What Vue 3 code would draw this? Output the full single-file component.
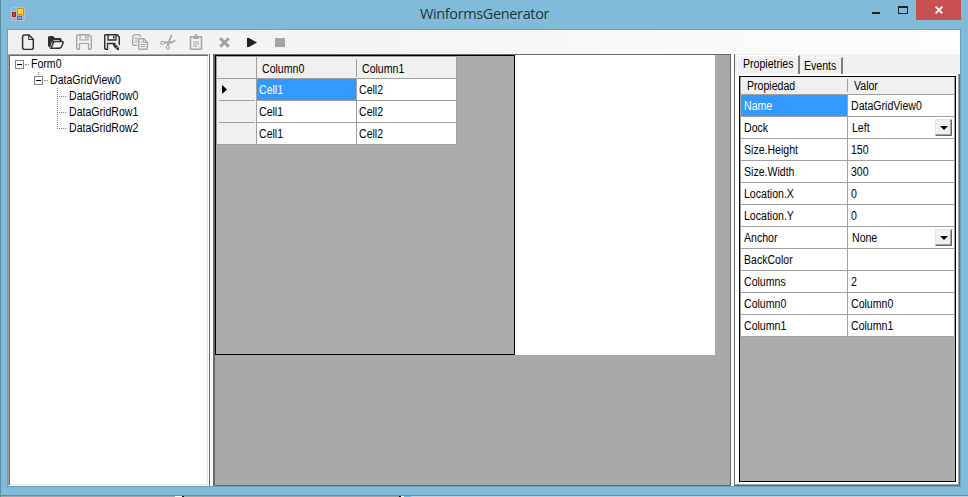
<script setup>
const icons = [
  { name: 'new', svg: '<path d="M3.800 1H9l4.300 4.300v8.900l-1.200 1.200H3.800L2.600 14.200V2.200z" fill="none" stroke="#303030" stroke-width="1.500"/><path d="M8.800 1v4.500h4.500" fill="none" stroke="#303030" stroke-width="1.200"/>' },
  { name: 'open', svg: '<path d="M0 3l1-1h4l2 2h5.500l1 1v2h-2V6H6L3.500 9 2 14 0 12z" fill="#303030"/><path d="M5.800 7.600h8.500l1 1-2 4.400-1.500 1.200H3z" fill="#f3f3f3" stroke="#303030" stroke-width="1.500"/>' },
  { name: 'save', off: true, svg: '<path d="M3.500 15.300H1.500L.7 14.500v-13l.8-.8h11.500l2.300 2.300v11.500l-.8 .8h-2" fill="none" stroke="#a6a6a6" stroke-width="1.400"/><path d="M4 1v5h8V1M3.500 16V9.500h9V16" fill="none" stroke="#a6a6a6" stroke-width="1.200"/><path d="M9 2h1.500v2.500H9z" fill="#a6a6a6"/>' },
  { name: 'save-as', svg: '<path d="M3.500 15.300H1.500L.7 14.500v-13l.8-.8h11.500l2.300 2.300v8" fill="none" stroke="#303030" stroke-width="1.500"/><path d="M4 1v5h8V1M3.500 16V9.500h8" fill="none" stroke="#303030" stroke-width="1.300"/><path d="M9 2h1.500v2.500H9z" fill="#303030"/><path d="M8.500 9.500l3 .8 3.500 3.500v2.200h-1.800l-3.500-3.500z" fill="#303030"/><path d="M12 14.500l1.500-1.500" stroke="#f3f3f3" stroke-width=".7"/>' },
  { name: 'copy', off: true, svg: '<path d="M5.500 11.300H1.500L.7 10.500v-8L2.500 .7H7l2 2" fill="none" stroke="#a6a6a6" stroke-width="1.300"/><path d="M2.500 4h3M2.500 6h3M2.500 8h3" stroke="#a6a6a6"/><path d="M6.700 4.700h5l3.600 3.600v6.200l-.8 .8H7.500l-.8-.8z" fill="#f3f3f3" stroke="#a6a6a6" stroke-width="1.400"/><path d="M11.500 5v3.500H15M8.500 8h2M8.500 10.500h5M8.500 12.500h5" fill="none" stroke="#a6a6a6"/>' },
  { name: 'cut', off: true, svg: '<path d="M11.500 1L7.800 11M15.500 6.500L11 8.500H5" fill="none" stroke="#a6a6a6" stroke-width="1.800"/><ellipse cx="2.700" cy="8.700" rx="2" ry="1.400" fill="none" stroke="#a6a6a6" stroke-width="1.100"/><ellipse cx="7.800" cy="13.200" rx="1.300" ry="2.100" fill="none" stroke="#a6a6a6" stroke-width="1.100"/>' },
  { name: 'paste', off: true, svg: '<path d="M3 2.700h10l.5 .5v11.600l-.5 .5H3l-.5-.5V3.200z" fill="none" stroke="#a6a6a6" stroke-width="1.600"/><path d="M5 2h1.500l.5-2h2l.5 2H11v3H5zM5 7.500h6v1H5zM5 9.500h6v1H5zM5 11.500h4v1H5z" fill="#a6a6a6"/><path d="M7.500 1.500h1v1h-1z" fill="#f3f3f3"/>' },
  { name: 'delete', off: true, svg: '<path d="M4.200 4.200l8.600 8.600M12.800 4.200l-8.600 8.600" stroke="#a0a0a0" stroke-width="3"/>' },
  { name: 'run', svg: '<path d="M3 4h2l8 4.500L5 13H3z" fill="#202020"/>' },
  { name: 'stop', off: true, svg: '<path d="M3 4h10v9H3z" fill="#a3a3a3"/>' },
]

const gridRows = [['Cell1', 'Cell2'], ['Cell1', 'Cell2'], ['Cell1', 'Cell2']]

const props = [
  { name: 'Name', value: 'DataGridView0' },
  { name: 'Dock', value: 'Left', combo: true },
  { name: 'Size.Height', value: '150' },
  { name: 'Size.Width', value: '300' },
  { name: 'Location.X', value: '0' },
  { name: 'Location.Y', value: '0' },
  { name: 'Anchor', value: 'None', combo: true },
  { name: 'BackColor', value: '' },
  { name: 'Columns', value: '2' },
  { name: 'Column0', value: 'Column0' },
  { name: 'Column1', value: 'Column1' },
]
</script>

<template>
  <div class="window">
    <header class="titlebar">
      <svg class="appicon" width="14" height="14" viewBox="0 0 14 14">
        <path d="M.5 .5h13v13H.5zM5.500 0v14M0 4.500h5M0 10.500h14" fill="none" stroke="#bdbdbd" />
        <path d="M6.500 1.500h6v6h-6z" fill="#ffd24a" stroke="#c79414" />
        <path d="M1.500 5.500h3v4h-3z" fill="#e04635" stroke="#a71616" />
        <path d="M6.500 9.500h4v3h-4z" fill="#78a7f0" stroke="#3d6fce" />
      </svg>
      <h1>WinformsGenerator</h1>
      <div class="controls">
        <svg width="56" height="20" viewBox="0 0 56 20">
          <path d="M0 12h8v2H0z" fill="#222" />
          <path d="M26 6h10v8H26zM27 8v5h8V8z" fill="#222" fill-rule="evenodd" />
        </svg>
        <div class="close">
          <svg width="8" height="8" viewBox="0 0 8 8"><path d="M.7 .7l6.600 6.600M7.300 .7L.7 7.300" stroke="#fff" stroke-width="1.900" /></svg>
        </div>
      </div>
    </header>

    <div class="client">
      <nav class="toolbar">
        <svg v-for="i in icons" :key="i.name" width="16" height="16" viewBox="0 0 16 16" v-html="i.svg" />
      </nav>

      <div class="body">
        <aside class="tree">
          <div class="node"><i class="box"></i><i class="dots"></i><span class="t">Form0</span></div>
          <div class="node child"><i class="box"></i><i class="dots"></i><span class="t">DataGridView0</span></div>
          <div v-for="n in 3" :key="n" class="node leaf"><i class="elbow" :class="{ last: n === 3 }"></i><span class="t">DataGridRow{{ n - 1 }}</span></div>
        </aside>
        <div class="split first"></div>
        <main class="canvas">
          <div class="form">
            <div class="gridview">
              <div class="gr head"><div class="rh"></div><div class="c"><span class="t">Column0</span></div><div class="c"><span class="t">Column1</span></div></div>
              <div v-for="(r, i) in gridRows" :key="i" class="gr">
                <div class="rh"><svg v-if="i === 0" width="5" height="9" viewBox="0 0 5 9"><path d="M0 0l5 4.500L0 9z" /></svg></div>
                <div v-for="(v, j) in r" :key="j" class="c" :class="{ sel: i === 0 && j === 0 }"><span class="t">{{ v }}</span></div>
              </div>
            </div>
          </div>
        </main>
        <div class="split second"></div>
        <aside class="side">
          <div class="tabs">
            <div class="tab active"><span class="t">Propietries</span></div>
            <div class="tab"><span class="t">Events</span></div>
          </div>
          <div class="page">
            <div class="pgrid">
              <div class="pr phead"><div class="pn"><span class="t">Propiedad</span></div><div class="pv"><span class="t">Valor</span></div></div>
              <div v-for="(p, i) in props" :key="p.name" class="pr">
                <div class="pn" :class="{ sel: i === 0 }"><span class="t">{{ p.name }}</span></div>
                <div class="pv" :class="{ combo: p.combo }">
                  <span class="t">{{ p.value }}</span>
                  <div v-if="p.combo" class="drop"><svg width="8" height="4" viewBox="0 0 8 4"><path d="M0 0h8L4 4z" /></svg></div>
                </div>
              </div>
            </div>
          </div>
        </aside>
      </div>
    </div>
    <footer class="under"></footer>
  </div>
</template>

<style>
body { margin: 0; overflow: hidden; }
</style>

<style scoped>
* { box-sizing: border-box; }
.window { width: 968px; height: 497px; background: #80bcd9; border-left: 1px solid #568ea8; font: 12px/16px "Liberation Sans", sans-serif; color: #000; display: flex; flex-direction: column; }
.titlebar { height: 29px; flex: none; display: flex; position: relative; padding: 7px 7px 0 10px; justify-content: space-between; }
h1 { margin: 0; position: absolute; left: 0; right: 0; top: 4px; text-align: center; font: 14.500px/20px "Open Sans", "Noto Sans", sans-serif; letter-spacing: -.36px; color: #24343d; }
.controls { display: flex; margin-top: -7px; }
.controls > svg { margin-right: -12px; }
.close { width: 45px; height: 20px; background: #c75050; display: flex; align-items: center; justify-content: center; }
.client { margin-left: 6px; width: 954px; height: 458px; flex: none; border: 1px solid #69a2bd; display: flex; flex-direction: column; }
.toolbar { height: 24px; flex: none; display: flex; gap: 12px; padding: 4px 12px; background: linear-gradient(90deg, #f0f0f0, #fdfdfd); }
.body { display: flex; height: 432px; }
.t { display: inline-block; white-space: pre; transform: scaleX(.88); transform-origin: 0 50%; }
.tree { width: 201px; flex: none; background: #fff; border-left: 1px solid #a0a0a0; border-top: 1px solid #a0a0a0; border-right: 1px solid #fff; border-bottom: 1px solid #fff; box-shadow: inset 1px 1px #696969, inset -1px -1px #e3e3e3; padding: 1px 0 0 6px; }
.node { display: flex; align-items: center; height: 16px; }
.box { width: 9px; height: 9px; border: 1px solid #848484; flex: none; background: linear-gradient(#000, #000) center / 5px 1px no-repeat; }
.dots { width: 4px; margin: 0 3px 0 1px; border-top: 1px dotted #808080; }
.node > .dots + .t { margin-left: -1px; }
.leaf .t { margin-left: -2px; }
.child { padding-left: 19px; background: repeating-linear-gradient(#808080 0 1px, #fff 1px 2px) 23px 0 / 1px 4px no-repeat; }
.leaf { padding-left: 42px; }
.elbow { width: 9px; height: 16px; margin-right: 5px; flex: none; background: repeating-linear-gradient(90deg, #808080 0 1px, #fff 1px 2px) 0 8px / 100% 1px no-repeat, repeating-linear-gradient(#808080 0 1px, #fff 1px 2px) 0 0 / 1px 100% no-repeat; }
.elbow.last { height: 9px; align-self: flex-start; }
.split { flex: none; background: #fcfcfc; }
.first { width: 6px; border-left: 1px solid #696969; border-right: 2px solid #696969; }
.second { width: 5px; border-left: 1px solid #696969; border-right: 1px solid #696969; }
.canvas { width: 515px; flex: none; background: #a9a9a9; border-top: 1px solid #696969; border-bottom: 1px solid #696969; }
.form { width: 500px; height: 300px; background: #fff; }
.gridview { width: 300px; height: 300px; background: #ababab; border: 1px solid #000; }
.gr { display: flex; width: 241px; height: 22px; border-left: 1px solid #a0a0a0; }
.head { height: 23px; border-top: 1px solid #a0a0a0; }
.rh { width: 40px; flex: none; background: linear-gradient(#a0a0a0, #a0a0a0) 2px 100% / 36px 1px no-repeat #f0f0f0; border-right: 1px solid #a0a0a0; padding: 6px 0 0 5px; }
.head .rh, .gr:last-child .rh { background-size: 40px 1px; background-position: 0 100%; }
.rh svg { display: block; }
.c { width: 100px; background: #fff; border-right: 1px solid #a0a0a0; border-bottom: 1px solid #a0a0a0; padding: 3px 0 0 2px; }
.head .c { background: #f0f0f0; padding: 4px 0 0 5px; }
.head .c:nth-child(2) { border-right: 0; background: linear-gradient(#a0a0a0, #a0a0a0) 100% 2px / 1px 18px no-repeat #f0f0f0; }
.gridview .sel, .pn.sel { background: #3399ff; color: #fff; }
.side { width: 225px; background: #f0f0f0; }
.tabs { display: flex; align-items: flex-end; height: 20px; padding-left: 2px; }
.tab { height: 17px; width: 43px; border-top: 1px solid #fff; border-right: 2px solid #696969; border-right-color: #7d7d7d; padding: 0 0 0 4px; }
.tab.active { height: 19px; width: 63px; padding-left: 5px; border-left: 1px solid #fff; }
.page { height: 412px; background: #fff; border-right: 1px solid #696969; border-bottom: 1px solid #696969; box-shadow: inset -1px -1px #a0a0a0; padding: 2px 2px 2px 4px; }
.pgrid { height: 406px; width: 217px; border: 1px solid #000; background: #ababab; }
.pr { display: flex; height: 22px; border-bottom: 1px solid #a0a0a0; border-left: 1px solid #a0a0a0; }
.phead { height: 18px; }
.pn, .pv { border-right: 1px solid #a0a0a0; background: #fff; padding: 3px 0 0 3px; }
.pn { width: 107px; flex: none; }
.pv { flex: 1; display: flex; justify-content: space-between; }
.pv.combo { padding-left: 4px; }
.phead .pn, .phead .pv { background: #f0f0f0; padding: 1px 0 0 6px; }
.phead .pn { border-right: 0; background: linear-gradient(#a0a0a0, #a0a0a0) 100% 2px / 1px 13px no-repeat #f0f0f0; }
.drop { width: 17px; height: 17px; margin: -1px 2px 0 0; background: #f0f0f0; border: 1px solid; border-color: #e3e3e3 #696969 #696969 #e3e3e3; box-shadow: inset -1px -1px #a0a0a0; display: flex; align-items: center; justify-content: center; }
.under { margin-top: 8px; height: 2px; border-top: 1px solid #568ea8; background: linear-gradient(90deg, #a0a5a8 0 174px, #fff 174px 181px, #111 181px 183px, #a0a5a8 183px 398px, #111 398px 400px, #fff 400px 403px, #70b5d5 403px 410px, #c3cde0 410px); }
</style>
